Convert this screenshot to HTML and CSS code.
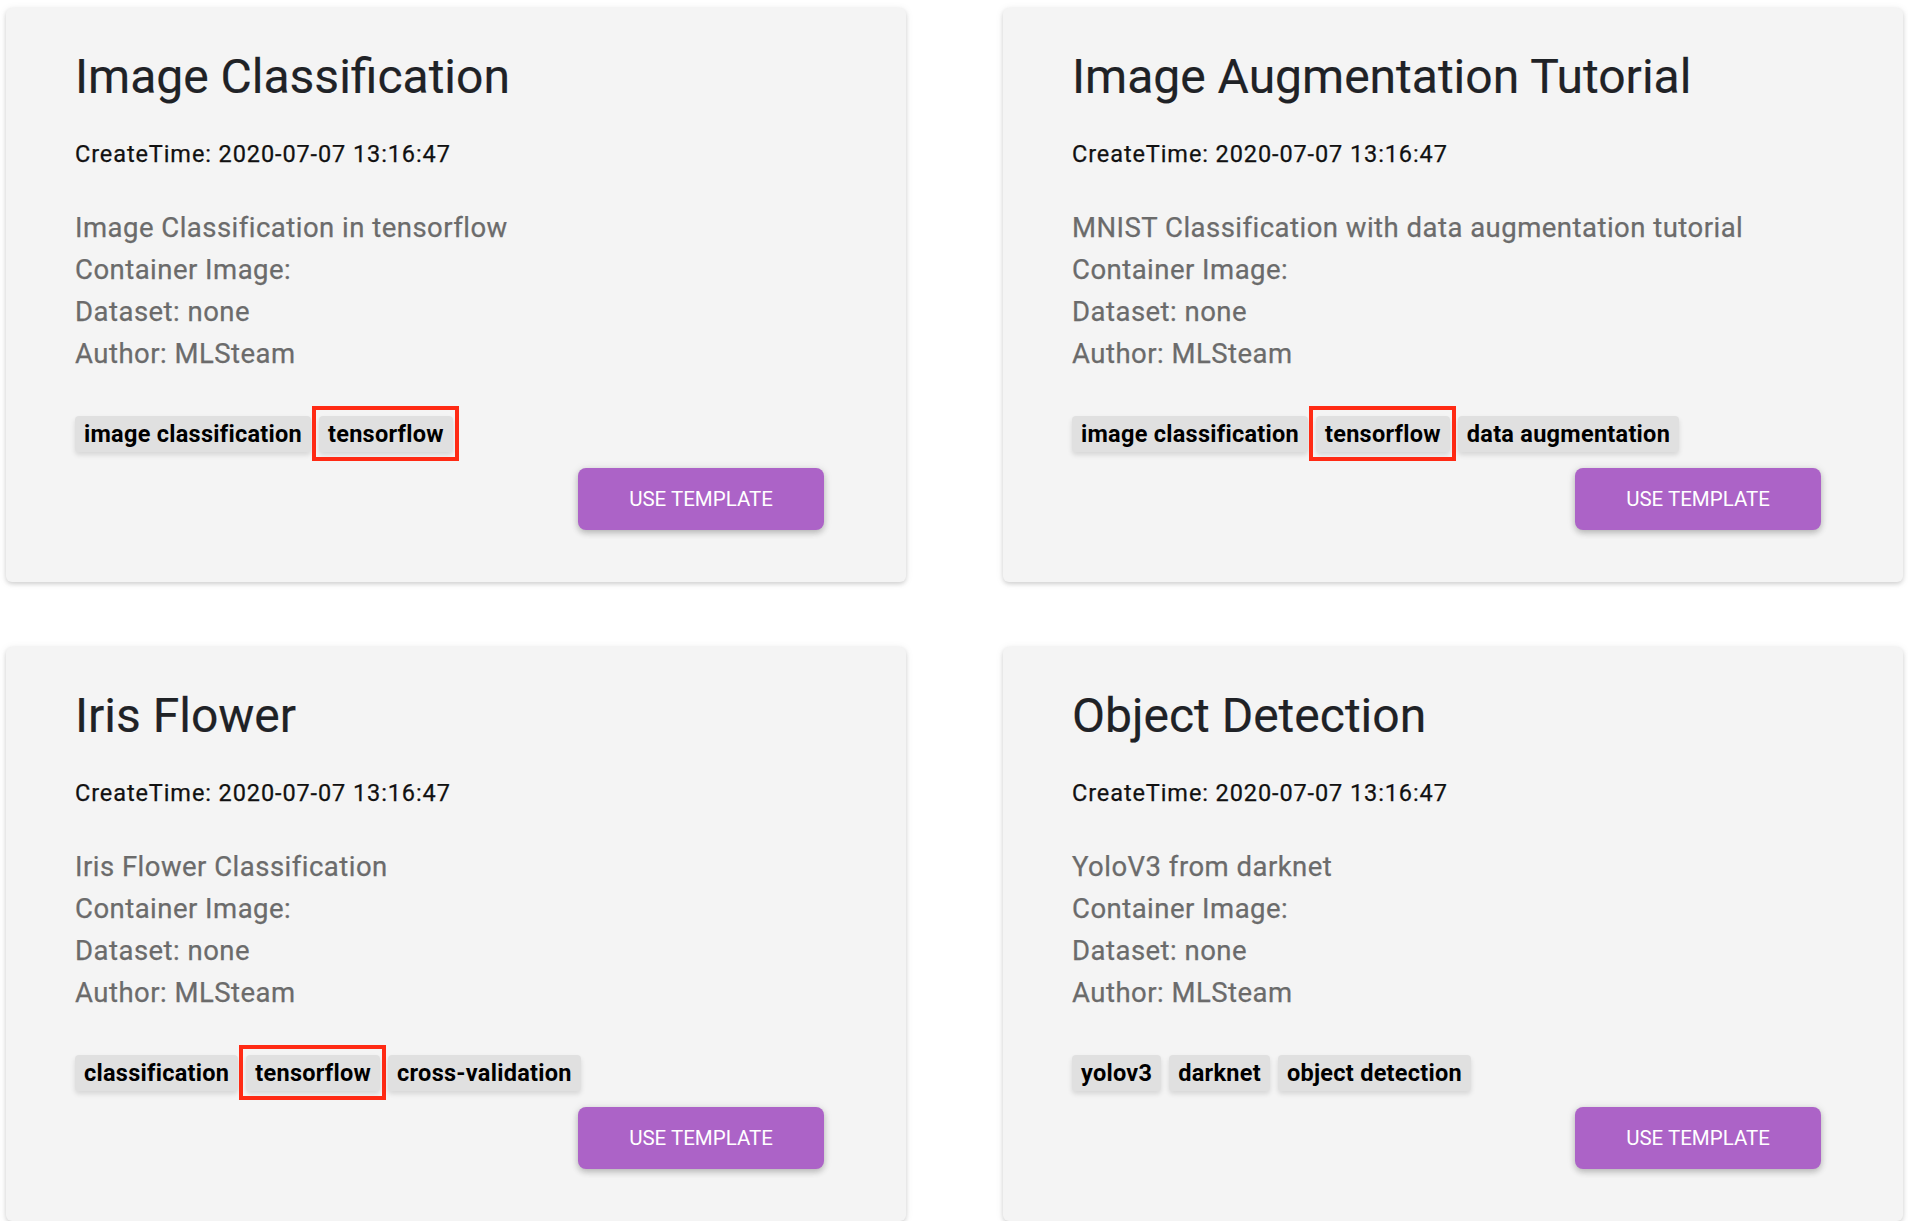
FILE: index.html
```html
<!DOCTYPE html>
<html>
<head>
<meta charset="utf-8">
<link rel="stylesheet" href="styles.css">
</head>
<body>
<div class="grid">
  <div class="card">
    <h2 class="title">Image Classification</h2>
    <p class="time">CreateTime: 2020-07-07 13:16:47</p>
    <div class="desc">
      <div>Image Classification in tensorflow</div>
      <div>Container Image:</div>
      <div>Dataset: none</div>
      <div>Author: MLSteam</div>
    </div>
    <div class="chips"><span class="chip">image classification</span><span class="chip hl">tensorflow</span></div>
    <div class="actions"><button class="btn">USE TEMPLATE</button></div>
  </div>
  <div class="card">
    <h2 class="title">Image Augmentation Tutorial</h2>
    <p class="time">CreateTime: 2020-07-07 13:16:47</p>
    <div class="desc">
      <div>MNIST Classification with data augmentation tutorial</div>
      <div>Container Image:</div>
      <div>Dataset: none</div>
      <div>Author: MLSteam</div>
    </div>
    <div class="chips"><span class="chip">image classification</span><span class="chip hl">tensorflow</span><span class="chip">data augmentation</span></div>
    <div class="actions"><button class="btn">USE TEMPLATE</button></div>
  </div>
  <div class="card">
    <h2 class="title">Iris Flower</h2>
    <p class="time">CreateTime: 2020-07-07 13:16:47</p>
    <div class="desc">
      <div>Iris Flower Classification</div>
      <div>Container Image:</div>
      <div>Dataset: none</div>
      <div>Author: MLSteam</div>
    </div>
    <div class="chips"><span class="chip">classification</span><span class="chip hl">tensorflow</span><span class="chip">cross-validation</span></div>
    <div class="actions"><button class="btn">USE TEMPLATE</button></div>
  </div>
  <div class="card">
    <h2 class="title">Object Detection</h2>
    <p class="time">CreateTime: 2020-07-07 13:16:47</p>
    <div class="desc">
      <div>YoloV3 from darknet</div>
      <div>Container Image:</div>
      <div>Dataset: none</div>
      <div>Author: MLSteam</div>
    </div>
    <div class="chips"><span class="chip">yolov3</span><span class="chip">darknet</span><span class="chip">object detection</span></div>
    <div class="actions"><button class="btn">USE TEMPLATE</button></div>
  </div>
</div>
</body>
</html>
```
FILE: styles.css
```css
html, body {
  margin: 0;
  padding: 0;
  background: #ffffff;
  font-family: Roboto, "Liberation Sans", sans-serif;
}
.grid {
  display: grid;
  grid-template-columns: 900px 900px;
  column-gap: 97px;
  row-gap: 65px;
  padding: 8px 0 0 6px;
}
.card {
  background: #f4f4f4;
  border-radius: 6px;
  box-shadow: 0 2px 4px rgba(0,0,0,0.14), 0 1px 8px rgba(0,0,0,0.08);
  padding: 40px 70px 52px 69px;
  display: flex;
  flex-direction: column;
}
.title {
  margin: 0;
  font-size: 48px;
  line-height: 58px;
  font-weight: 400;
  color: #1f2226;
  -webkit-text-stroke: 0.2px #1f2226;
}
.time {
  margin: 35px 0 0;
  font-size: 23.5px;
  line-height: 26px;
  letter-spacing: 0.9px;
  color: #111;
  -webkit-text-stroke: 0.25px #111;
}
.desc {
  margin-top: 40px;
  font-size: 27.5px;
  line-height: 42px;
  letter-spacing: 0.48px;
  color: #6b6b6b;
  -webkit-text-stroke: 0.25px #6b6b6b;
}
.chips {
  margin-top: 41px;
  display: flex;
  gap: 8px;
}
.chip {
  position: relative;
  background: #e0e0e0;
  border-radius: 4px;
  padding: 5px 9px;
  font-size: 23.5px;
  line-height: 26px;
  letter-spacing: 0.27px;
  font-weight: 700;
  color: #000;
  box-shadow: 0 3px 5px rgba(0,0,0,0.12);
}
.chip.hl::after {
  content: "";
  position: absolute;
  top: -10px;
  right: -6px;
  bottom: -9px;
  left: -7px;
  border: 4px solid #ff2a14;
}
.actions {
  margin-top: 16px;
  display: flex;
  justify-content: flex-end;
  padding-right: 12px;
}
.btn {
  width: 246px;
  height: 62px;
  border: none;
  border-radius: 8px;
  background: #ac63c7;
  color: #fff;
  font-family: Roboto, "Liberation Sans", sans-serif;
  font-size: 20.5px;
  font-weight: 400;
  box-shadow: 0 3px 6px rgba(0,0,0,0.2), 0 1px 10px rgba(0,0,0,0.1);
}
```
